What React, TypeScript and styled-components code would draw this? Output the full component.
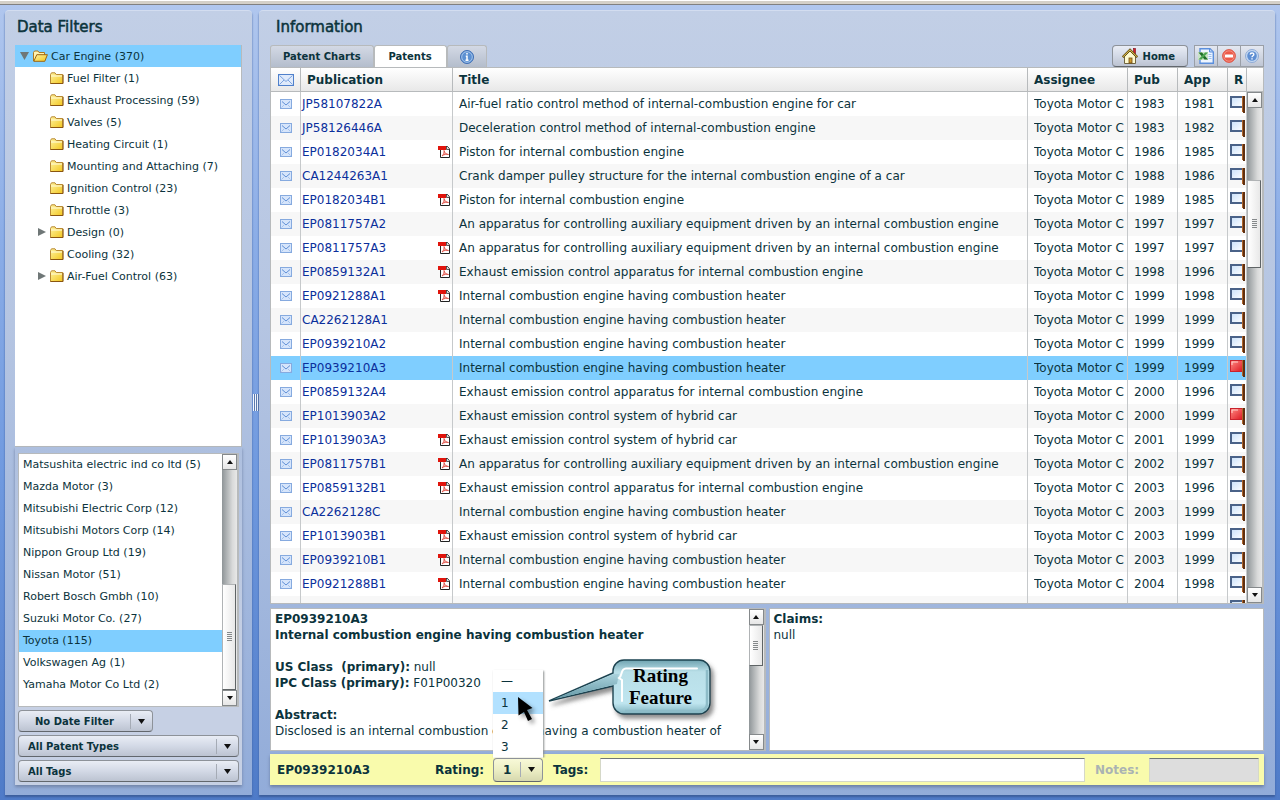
import React from "react";
import styled, { createGlobalStyle, css } from "styled-components";

const ink = "#0b333c";
const line = "#b7babc";
const sky = "#7fceff";

const GlobalStyle = createGlobalStyle`
  * { box-sizing: border-box; }
  body {
    margin: 0;
    font-family: "DejaVu Sans", Verdana, sans-serif;
    font-size: 12px;
    color: ${ink};
  }
  button, input, select { font-family: inherit; color: inherit; }
`;

/* ---------- Shell ---------- */

const Page = styled.div`
  display: flex;
  flex-direction: column;
  height: 100vh;
  min-height: 640px;
  overflow: hidden;
  background: linear-gradient(#b1c7ee 0, #8bade7 30%, #6f99df 60%, #4f7bc8 100%);
`;

const BrowserEdge = styled.div`
  flex: none;
  height: 5px;
  border-top: 1px solid #fff;
  border-bottom: 1px solid #808080;
  background: #d4d0c8;
`;

const Columns = styled.main`
  flex: 1;
  min-height: 0;
  display: flex;
  padding: 5px;
`;

const Panel = styled.section<{ $width?: string }>`
  flex: ${(p) => (p.$width ? `0 0 ${p.$width}` : "1")};
  min-width: 0;
  display: flex;
  flex-direction: column;
  padding: ${(p) => (p.$width ? "0 10px 10px" : "0 11px 10px")};
  border-top: 1px solid #d3ddf0;
  border-radius: 4px 4px 0 0;
  background: linear-gradient(#c2cfe6, #b5c5e2 40%, #92acd9);
  box-shadow: 0 2px 2px #3c5e9c;
`;

const PanelTitle = styled.h2<{ $inset: number }>`
  flex: none;
  margin: 0;
  padding: 0 ${(p) => p.$inset}px;
  height: 34px;
  line-height: 32px;
  font-size: 15px;
  font-weight: 400;
  -webkit-text-stroke: 0.5px ${ink};
`;

const Splitter = styled.div`
  flex: 0 0 7px;
  display: flex;
  align-items: center;
  justify-content: center;
  gap: 1px;
`;

const GripLine = styled.span`
  width: 1px;
  height: 17px;
  background: #f4f8ff;
  box-shadow: 1px 0 0 #5b79ab;
`;

/* ---------- Scroll bar ---------- */

const Bar = styled.div`
  flex: 0 0 16px;
  display: flex;
  flex-direction: column;
  background: linear-gradient(90deg, #8f9598, #d9dada 70%, #e8e8e8);
  border-right: 1px solid ${line};
`;

const BarButton = styled.button`
  flex: 0 0 16px;
  display: flex;
  align-items: center;
  justify-content: center;
  padding: 0;
  border: 1px solid #85898b;
  background: linear-gradient(#fff, #e6e6e6);
`;

const Space = styled.div<{ $share: number }>`
  flex: ${(p) => p.$share} 0 0;
`;

const Thumb = styled.div<{ $share: number }>`
  flex: ${(p) => p.$share} 0 0;
  display: flex;
  flex-direction: column;
  align-items: center;
  justify-content: center;
  gap: 1px;
  margin-right: 1px;
  border: 1px solid #b0b3b5;
  border-right-color: #5f6466;
  border-bottom-color: #5f6466;
  background: linear-gradient(90deg, #fff, #e8e8e8);
`;

const ThumbLine = styled.span`
  width: 5px;
  height: 1px;
  background: #85898b;
`;

function ScrollBar({ before, thumb, after }: { before: number; thumb: number; after: number }) {
  return (
    <Bar>
      <BarButton aria-label="Scroll up">
        <svg width="6" height="4"><path d="M3 0 6 4H0z" fill="#111" /></svg>
      </BarButton>
      {before > 0 && <Space $share={before} />}
      <Thumb $share={thumb}>
        {[0, 1, 2, 3, 4].map((n) => <ThumbLine key={n} />)}
      </Thumb>
      {after > 0 && <Space $share={after} />}
      <BarButton aria-label="Scroll down">
        <svg width="6" height="4"><path d="M0 0H6L3 4z" fill="#111" /></svg>
      </BarButton>
    </Bar>
  );
}

/* ---------- Icons ---------- */

const FolderIcon = ({ open }: { open?: boolean }) => (
  <svg width={open ? 15 : 14} height="12" viewBox={open ? "0 0 15 12" : "0 0 14 12"}>
    <defs>
      <linearGradient id="folderFill" x1="0" y1="0" x2="1" y2="1">
        <stop offset="0" stopColor="#fff3a0" />
        <stop offset="1" stopColor="#f2c61e" />
      </linearGradient>
    </defs>
    {open ? (
      <>
        <path d="M.5 11V2.5L1.5 1H5L6 2.5H11.5V5" fill="#fff3b0" stroke="#b07a1c" />
        <path d="M.8 11.3 3.8 4.7H14.4L11.8 11.3z" fill="url(#folderFill)" stroke="#9a6412" />
      </>
    ) : (
      <>
        <path d="M.5 11.5V2.5L1.5.8H5L6.2 2.5H12.8V11.5z" fill="url(#folderFill)" stroke="#b98a34" />
        <path d="M1 4H12" stroke="#fffbe0" />
        <path d="M.5 11.5H13V3" fill="none" stroke="#8a5510" />
      </>
    )}
  </svg>
);

const EnvelopeIcon = ({ large }: { large?: boolean }) => (
  <svg width={large ? 16 : 12} height={large ? 12 : 10} viewBox={large ? "0 0 16 12" : "0 0 12 10"}>
    {large ? (
      <>
        <rect x=".5" y=".5" width="15" height="11" fill="#dfeafb" stroke="#4f80cb" />
        <path d="M1.5 1.5 8 7.5 14.5 1.5M1.5 10.5 6 6M14.5 10.5 10 6" fill="none" stroke="#7ba3df" />
      </>
    ) : (
      <>
        <rect x=".5" y=".5" width="11" height="9" fill="#d6e5fb" stroke="#86aadf" />
        <path d="M2 2.5 6 6 10 2.5" fill="none" stroke="#5f8fd6" />
        <path d="M1.5 8.5 4 6M10.5 8.5 8 6" fill="none" stroke="#a5c3ee" />
      </>
    )}
  </svg>
);

const PdfIcon = () => (
  <svg width="12" height="12" viewBox="0 0 12 12">
    <path d="M2.5 1V11.5H11.5V3L9.5.5H2.5z" fill="#fff" stroke="#222" />
    <path d="M8.5.5V3.5H11.5" fill="#ddd" stroke="#333" strokeWidth=".8" />
    <rect x="0" y="0" width="8" height="4" fill="#e0140c" />
    <path d="M4 10C5.500 8.500 6.500 6.500 6 4.500 7 7.500 8.500 8.500 10.500 8.500 8.500 7.800 6 8.300 4 10z" fill="#f6b5ae" stroke="#e0584f" />
  </svg>
);

const FlagIcon = ({ red }: { red?: boolean }) => (
  <svg width="15" height="17" viewBox="0 0 15 17">
    <defs>
      <linearGradient id="flagRed" x1="0" y1="0" x2="1" y2="1">
        <stop offset="0" stopColor="#ff8d85" />
        <stop offset="1" stopColor="#dd1620" />
      </linearGradient>
      <linearGradient id="flagPlain" x1="0" y1="0" x2="1" y2="1">
        <stop offset="0" stopColor="#c9e0fa" />
        <stop offset="1" stopColor="#fff" />
      </linearGradient>
    </defs>
    {red ? (
      <>
        <rect x=".5" y=".5" width="12" height="11" fill="url(#flagRed)" stroke="#c9222c" />
        <path d="M2 5V2H8" fill="none" stroke="#ffd0cb" />
      </>
    ) : (
      <rect x="1" y="1" width="12" height="10" fill="url(#flagPlain)" stroke="#4a6288" strokeWidth="2" />
    )}
    <path d="M12.5 0V16" stroke="#b0652a" />
    <path d="M14 0V17" stroke="#5f2f10" strokeWidth="2" />
  </svg>
);

const InfoIcon = () => (
  <svg width="14" height="14" viewBox="0 0 14 14">
    <circle cx="7" cy="7" r="6.5" fill="#5c90d2" stroke="#3f6fb5" />
    <circle cx="7" cy="7" r="5.3" fill="none" stroke="#b5d0f0" strokeWidth=".8" />
    <path d="M7 3V4.6M5.8 6.2H7V10M5.5 10.3H8.5" fill="none" stroke="#fff" strokeWidth="1.5" />
  </svg>
);

const HomeIcon = () => (
  <svg width="16" height="16" viewBox="0 0 16 16">
    <rect x="11.5" y=".5" width="2" height="6" fill="#d8192a" stroke="#7a0f16" strokeWidth=".6" />
    <path d="M2.5 8.5V15.5H13.5V8.5L8 3z" fill="#fffbd0" stroke="#6f6440" />
    <path d="M.6 9.2 8 1.8 15.4 9.2" fill="none" stroke="#5f4b12" strokeWidth="2.2" />
    <path d="M1 8.8 8 1.8 15 8.8" fill="none" stroke="#f0d058" strokeWidth="1" />
    <rect x="7" y="10" width="3" height="5" fill="#d09a2c" stroke="#6e4a14" strokeWidth=".8" />
  </svg>
);

const ExcelIcon = () => (
  <svg width="16" height="16" viewBox="0 0 16 16">
    <path d="M2 .7H12L15.3 4V15.3H2z" fill="#eef5ff" stroke="#5b8fdc" strokeWidth="1.4" />
    <path d="M11.5 1V4H15" fill="#bcd5f7" stroke="#5b8fdc" />
    <path d="M10.5 6.5H13.5M10.5 8.5H13.5M10.5 10.5H13.5" stroke="#9fc0ea" />
    <rect x="0" y="4" width="10" height="8" fill="#c9e3c6" />
    <path d="M.5 4.5H4L10 11.5H6.5z" fill="#1d6f28" />
    <path d="M10 4.5H7L.5 11.5H3.5z" fill="#4ba551" />
  </svg>
);

const RemoveIcon = () => (
  <svg width="14" height="14" viewBox="0 0 14 14">
    <circle cx="7" cy="7" r="6.4" fill="#ec5a4a" stroke="#dd5a4c" />
    <circle cx="7" cy="7" r="5.2" fill="none" stroke="#f59b8d" strokeWidth=".8" />
    <rect x="3" y="5.5" width="8" height="3" rx=".5" fill="#fff" />
  </svg>
);

const HelpIcon = () => (
  <svg width="14" height="14" viewBox="0 0 14 14">
    <circle cx="7" cy="7" r="6.5" fill="#c5d9f2" stroke="#8fabd6" />
    <circle cx="7" cy="7" r="4.8" fill="#5e8fd3" />
    <path d="M5.2 5.6C5.2 3.4 8.8 3.4 8.8 5.5 8.8 6.8 7 6.7 7 8.2M7 9.2V10.5" fill="none" stroke="#fff" strokeWidth="1.4" />
  </svg>
);

/* ---------- Left panel ---------- */

const Tree = styled.ul`
  flex: 1;
  min-height: 0;
  overflow: hidden;
  margin: 0;
  padding: 0;
  list-style: none;
  border: 1px solid ${line};
  border-left: 0;
  border-top: 0;
  background: #fff;
`;

const TreeItem = styled.li<{ $root?: boolean }>`
  display: flex;
  align-items: center;
  gap: 2px;
  height: 22px;
  padding-left: ${(p) => (p.$root ? 5 : 22)}px;
  font-size: 11px;
  background: ${(p) => (p.$root ? sky : "transparent")};
  svg { flex: none; }
`;

const Twisty = styled.span`
  flex: 0 0 11px;
  height: 8px;
  display: flex;
  align-items: center;
`;

const TreeLabel = styled.span`
  padding-left: 1px;
`;

const FilterBox = styled.div`
  flex: none;
  display: flex;
  flex-direction: column;
  gap: 3px;
  padding: 6px 3px 3px;
  background: linear-gradient(#adbfdf, #c6d0e4 60%);
  box-shadow: 0 2px 3px #7184a8;
`;

const ListFrame = styled.div`
  display: flex;
  height: 254px;
  border: 1px solid ${line};
  background: #fff;
`;

const CompanyList = styled.ul`
  flex: 1;
  min-width: 0;
  overflow: hidden;
  margin: 0;
  padding: 0;
  list-style: none;
`;

const Company = styled.li<{ $on?: boolean }>`
  height: 22px;
  line-height: 22px;
  padding-left: 4px;
  font-size: 11px;
  white-space: nowrap;
  background: ${(p) => (p.$on ? sky : "transparent")};
`;

const buttonFace = css`
  border: 1px solid #8d9299;
  border-bottom-color: #62676d;
  border-radius: 4px;
  background: linear-gradient(#e9edf5, #d3d9e6 50%, #bcc3d1);
  font-size: 10px;
  font-weight: 700;
`;

const SplitButton = styled.button`
  ${buttonFace}
  flex: none;
  align-self: flex-start;
  width: 135px;
  height: 22px;
  display: flex;
  align-items: center;
  padding: 0;
`;

const SplitLabel = styled.span`
  flex: 1;
  text-align: center;
`;

const SplitArrow = styled.span`
  flex: 0 0 22px;
  height: 15px;
  display: flex;
  align-items: center;
  justify-content: center;
  border-left: 1px solid #a5abb5;
`;

const SelectWrap = styled.div<{ $tall?: boolean }>`
  flex: none;
  position: relative;
  height: ${(p) => (p.$tall ? 24 : 22)}px;
`;

const Select = styled.select<{ $pale?: boolean }>`
  ${buttonFace}
  appearance: none;
  width: 100%;
  height: 100%;
  margin: 0;
  padding: 0 24px 0 9px;
  ${(p) => p.$pale && css`
    font-size: 12px;
    background: linear-gradient(#f8f9d8, #eceec4 50%, #d6d8ae);
  `}
`;

const SelectArrow = styled.span`
  position: absolute;
  right: 1px;
  top: 4px;
  width: 22px;
  height: 15px;
  display: flex;
  align-items: center;
  justify-content: center;
  border-left: 1px solid #a5abb5;
  pointer-events: none;
`;

const DownArrow = () => (
  <svg width="7" height="5"><path d="M0 0H7L3.5 5z" fill="#111" /></svg>
);

/* ---------- Tab row ---------- */

const TabRow = styled.div`
  flex: none;
  display: flex;
  align-items: stretch;
  height: 22px;
`;

const Tab = styled.button<{ $on?: boolean }>`
  display: flex;
  align-items: center;
  justify-content: center;
  padding: 0 12px;
  min-width: ${(p) => (p.$on ? 73 : 39)}px;
  border: 1px solid ${line};
  border-bottom: 0;
  border-radius: 3px 3px 0 0;
  font-size: 10px;
  font-weight: 700;
  background: ${(p) => (p.$on ? "#fff" : "linear-gradient(#d3d9e5, #b4bdcc)")};
`;

const Spring = styled.div`
  flex: 1;
`;

const HomeButton = styled.button`
  ${buttonFace}
  display: flex;
  align-items: center;
  gap: 5px;
  padding: 0 12px 0 9px;
  margin-right: 6px;
`;

const Tools = styled.div`
  display: flex;
  border: 1px solid #9a9fa7;
`;

const IconButton = styled.button`
  width: 22px;
  display: flex;
  align-items: center;
  justify-content: center;
  padding: 0;
  border: 0;
  background: linear-gradient(#e4e8f1, #bfc6d4);
  & + & { width: 23px; border-left: 1px solid #9a9fa7; }
`;

/* ---------- Patent table ---------- */

const GridFrame = styled.div`
  flex: 1;
  min-height: 0;
  display: flex;
  overflow: hidden;
  border: 1px solid ${line};
  background: #fff;
`;

const GridBody = styled.div`
  flex: 1;
  min-width: 0;
  overflow: hidden;
`;

const Table = styled.table`
  width: 100%;
  table-layout: fixed;
  border-collapse: separate;
  border-spacing: 0;
`;

const headFace = css`
  height: 24px;
  border-bottom: 1px solid ${line};
  background: linear-gradient(#fff, #e8e8e8);
`;

const Th = styled.th<{ $center?: boolean }>`
  ${headFace}
  padding: 0 0 0 6px;
  text-align: left;
  font-size: 12px;
  border-right: 1px solid ${line};
  ${(p) => p.$center && css`padding: 0; text-align: center; svg { display: block; margin: 0 auto; }`}
`;

const Row = styled.tr<{ $on?: boolean }>`
  background: ${(p) => (p.$on ? sky : "#fff")};
  &:nth-child(even) { background: ${(p) => (p.$on ? sky : "#f7f7f7")}; }
`;

const Td = styled.td<{ $pad: number }>`
  height: 24px;
  padding: 0 2px 0 ${(p) => p.$pad}px;
  border-right: 1px solid #c6c9cb;
  overflow: hidden;
  white-space: nowrap;
`;

const IconTd = styled(Td)`
  padding: 0;
  svg { display: block; margin: 0 auto; }
`;

const Clip = styled.div`
  overflow: hidden;
`;

const PubCell = styled.div`
  display: flex;
  align-items: center;
  justify-content: space-between;
`;

const PubLink = styled.a`
  color: #0b2f9c;
  text-decoration: none;
`;

const GridScroll = styled.div`
  flex: 0 0 16px;
  display: flex;
  flex-direction: column;
`;

const HeadStub = styled.div`
  ${headFace}
  flex: none;
`;

const BarSlot = styled.div`
  flex: 1;
  min-height: 0;
  display: flex;
`;

/* ---------- Detail panes ---------- */

const Details = styled.div`
  flex: none;
  display: flex;
  gap: 3px;
  height: 143px;
  margin: 4px 0 3px;
`;

const Pane = styled.article`
  flex: 1 1 0;
  min-width: 0;
  display: flex;
  border: 1px solid ${line};
  background: #fff;
`;

const PaneText = styled.div`
  flex: 1;
  min-width: 0;
  overflow: hidden;
  padding: 2px 4px;
  line-height: 16px;
  white-space: pre-wrap;
`;

/* ---------- Rating bar ---------- */

const RateBar = styled.form`
  flex: none;
  display: flex;
  align-items: center;
  height: 31px;
  padding: 0 5px 0 7px;
  background: #f9fbac;
  box-shadow: 0 2px 3px #6b7ea3;
  font-size: 12px;
  font-weight: 700;
`;

const PatentId = styled.span`
  flex: 0 0 158px;
`;

const Label = styled.label<{ $width: number; $muted?: boolean }>`
  flex: 0 0 ${(p) => p.$width}px;
  color: ${(p) => (p.$muted ? "#aab3b3" : "inherit")};
`;

const Field = styled.input<{ $width?: string }>`
  flex: ${(p) => (p.$width ? `0 0 ${p.$width}` : "1")};
  min-width: 0;
  height: 24px;
  margin-right: ${(p) => (p.$width ? 0 : 10)}px;
  border: 1px solid #d5d8c8;
  border-top-color: #6f7777;
  background: #fff;
  &:disabled { background: #ddd; }
`;

const RatingBox = styled.div`
  position: relative;
  flex: 0 0 50px;
  margin-right: 10px;
`;

const Popup = styled.ul`
  position: absolute;
  z-index: 2;
  left: 0;
  bottom: 100%;
  width: 50px;
  margin: 0;
  padding: 0;
  list-style: none;
  background: #fff;
  box-shadow: 1px 1px 2px #8b9090;
  clip-path: inset(0 -3px 0 -3px);
`;

const Choice = styled.li<{ $on?: boolean }>`
  height: 22px;
  line-height: 22px;
  padding-left: 8px;
  font-weight: 400;
  background: ${(p) => (p.$on ? "#b2e1ff" : "#fff")};
`;

const Pointer = styled.svg`
  position: absolute;
  z-index: 4;
  left: 24px;
  bottom: 52px;
`;

const Callout = styled.div`
  position: absolute;
  z-index: 3;
  left: 52px;
  bottom: 58px;
  width: 176px;
  height: 66px;
`;

const CalloutText = styled.p`
  position: absolute;
  right: 12px;
  top: 7px;
  width: 97px;
  margin: 0;
  text-align: center;
  font-family: "Liberation Serif", "Times New Roman", serif;
  font-size: 19px;
  line-height: 22px;
  font-weight: 700;
  color: #000;
`;

/* ---------- Data ---------- */

const categories = [
  "Fuel Filter (1)",
  "Exhaust Processing (59)",
  "Valves (5)",
  "Heating Circuit (1)",
  "Mounting and Attaching (7)",
  "Ignition Control (23)",
  "Throttle (3)",
  "Design (0)",
  "Cooling (32)",
  "Air-Fuel Control (63)",
];
const branches = ["Design (0)", "Air-Fuel Control (63)"];

const companies = [
  "Matsushita electric ind co ltd (5)",
  "Mazda Motor (3)",
  "Mitsubishi Electric Corp (12)",
  "Mitsubishi Motors Corp (14)",
  "Nippon Group Ltd (19)",
  "Nissan Motor (51)",
  "Robert Bosch Gmbh (10)",
  "Suzuki Motor Co. (27)",
  "Toyota (115)",
  "Volkswagen Ag (1)",
  "Yamaha Motor Co Ltd (2)",
];

const assignee = "Toyota Motor C";
const heater = "Internal combustion engine having combustion heater";
const exhaust = "Exhaust emission control apparatus for internal combustion engine";
const hybrid = "Exhaust emission control system of hybrid car";
const auxiliary = "An apparatus for controlling auxiliary equipment driven by an internal combustion engine";

type Patent = [id: string, pdf: boolean, title: string, pub: string, app: string, flagged?: boolean];

const patents: Patent[] = [
  ["JP58107822A", false, "Air-fuel ratio control method of internal-combustion engine for car", "1983", "1981"],
  ["JP58126446A", false, "Deceleration control method of internal-combustion engine", "1983", "1982"],
  ["EP0182034A1", true, "Piston for internal combustion engine", "1986", "1985"],
  ["CA1244263A1", false, "Crank damper pulley structure for the internal combustion engine of a car", "1988", "1986"],
  ["EP0182034B1", true, "Piston for internal combustion engine", "1989", "1985"],
  ["EP0811757A2", false, auxiliary, "1997", "1997"],
  ["EP0811757A3", true, auxiliary, "1997", "1997"],
  ["EP0859132A1", true, exhaust, "1998", "1996"],
  ["EP0921288A1", true, heater, "1999", "1998"],
  ["CA2262128A1", false, heater, "1999", "1999"],
  ["EP0939210A2", false, heater, "1999", "1999"],
  ["EP0939210A3", false, heater, "1999", "1999", true],
  ["EP0859132A4", false, exhaust, "2000", "1996"],
  ["EP1013903A2", false, hybrid, "2000", "1999", true],
  ["EP1013903A3", true, hybrid, "2001", "1999"],
  ["EP0811757B1", true, auxiliary, "2002", "1997"],
  ["EP0859132B1", true, exhaust, "2003", "1996"],
  ["CA2262128C", false, heater, "2003", "1999"],
  ["EP1013903B1", true, hybrid, "2003", "1999"],
  ["EP0939210B1", true, heater, "2003", "1999"],
  ["EP0921288B1", true, heater, "2004", "1998"],
  ["EP1304377A2", false, "", "", ""],
];

const selected = "EP0939210A3";

/* ---------- App ---------- */

export default function App() {
  return (
    <>
      <GlobalStyle />
      <Page>
        <BrowserEdge />
        <Columns>
          <Panel $width="247px">
            <PanelTitle $inset={2}>Data Filters</PanelTitle>
            <Tree>
              <TreeItem $root>
                <Twisty><svg width="9" height="8"><path d="M0 0H9L4.5 8z" fill="#6f7777" /></svg></Twisty>
                <FolderIcon open />
                <TreeLabel>Car Engine (370)</TreeLabel>
              </TreeItem>
              {categories.map((c) => (
                <TreeItem key={c}>
                  <Twisty>
                    {branches.includes(c) && (
                      <svg width="9" height="8"><path d="M1 0 9 4 1 8z" fill="#6f7777" /></svg>
                    )}
                  </Twisty>
                  <FolderIcon />
                  <TreeLabel>{c}</TreeLabel>
                </TreeItem>
              ))}
            </Tree>
            <FilterBox>
              <ListFrame>
                <CompanyList>
                  {companies.map((c) => (
                    <Company key={c} $on={c.startsWith("Toyota")}>{c}</Company>
                  ))}
                </CompanyList>
                <ScrollBar before={115} thumb={105} after={0} />
              </ListFrame>
              <SplitButton>
                <SplitLabel>No Date Filter</SplitLabel>
                <SplitArrow><DownArrow /></SplitArrow>
              </SplitButton>
              <SelectWrap>
                <Select aria-label="Patent types"><option>All Patent Types</option></Select>
                <SelectArrow><DownArrow /></SelectArrow>
              </SelectWrap>
              <SelectWrap>
                <Select aria-label="Tags"><option>All Tags</option></Select>
                <SelectArrow><DownArrow /></SelectArrow>
              </SelectWrap>
            </FilterBox>
          </Panel>

          <Splitter>
            <GripLine /><GripLine /><GripLine />
          </Splitter>

          <Panel>
            <PanelTitle $inset={6}>Information</PanelTitle>
            <TabRow>
              <Tab>Patent Charts</Tab>
              <Tab $on>Patents</Tab>
              <Tab aria-label="About"><InfoIcon /></Tab>
              <Spring />
              <HomeButton><HomeIcon />Home</HomeButton>
              <Tools>
                <IconButton aria-label="Export to spreadsheet"><ExcelIcon /></IconButton>
                <IconButton aria-label="Remove"><RemoveIcon /></IconButton>
                <IconButton aria-label="Help"><HelpIcon /></IconButton>
              </Tools>
            </TabRow>
            <GridFrame>
              <GridBody>
                <Table>
                  <colgroup>
                    <col style={{ width: 30 }} />
                    <col style={{ width: 152 }} />
                    <col />
                    <col style={{ width: 100 }} />
                    <col style={{ width: 50 }} />
                    <col style={{ width: 50 }} />
                    <col style={{ width: 19 }} />
                  </colgroup>
                  <thead>
                    <tr>
                      <Th $center aria-label="Mail"><EnvelopeIcon large /></Th>
                      <Th>Publication</Th>
                      <Th>Title</Th>
                      <Th>Assignee</Th>
                      <Th>Pub</Th>
                      <Th>App</Th>
                      <Th>R</Th>
                    </tr>
                  </thead>
                  <tbody>
                    {patents.map(([id, pdf, title, pub, app, flagged]) => (
                      <Row key={id} $on={id === selected}>
                        <IconTd $pad={0}><EnvelopeIcon /></IconTd>
                        <Td $pad={1}>
                          <PubCell>
                            <PubLink href={`#${id}`}>{id}</PubLink>
                            {pdf && <PdfIcon />}
                          </PubCell>
                        </Td>
                        <Td $pad={6}>{title}</Td>
                        <Td $pad={6}><Clip>{title && assignee}</Clip></Td>
                        <Td $pad={6}>{pub}</Td>
                        <Td $pad={6}>{app}</Td>
                        <IconTd $pad={0}><FlagIcon red={flagged} /></IconTd>
                      </Row>
                    ))}
                  </tbody>
                </Table>
              </GridBody>
              <GridScroll>
                <HeadStub />
                <BarSlot><ScrollBar before={72} thumb={87} after={321} /></BarSlot>
              </GridScroll>
            </GridFrame>
            <Details>
              <Pane>
                <PaneText>
                  <b>{selected}</b>{"\n"}
                  <b>{heater}</b>{"\n\n"}
                  <b>{"US Class  (primary):"}</b>{" null\n"}
                  <b>IPC Class (primary):</b>{" F01P00320\n\n"}
                  <b>Abstract:</b>{"\n"}
                  Disclosed is an internal combustion engine having a combustion heater of
                </PaneText>
                <ScrollBar before={0} thumb={40} after={69} />
              </Pane>
              <Pane>
                <PaneText>
                  <b>Claims:</b>{"\nnull"}
                </PaneText>
              </Pane>
            </Details>
            <RateBar>
              <PatentId>{selected}</PatentId>
              <Label $width={58} htmlFor="rating">Rating:</Label>
              <RatingBox>
                <SelectWrap $tall>
                  <Select $pale id="rating" defaultValue="1"><option>1</option></Select>
                  <SelectArrow><DownArrow /></SelectArrow>
                </SelectWrap>
                <Popup>
                  <Choice>—</Choice>
                  <Choice $on>1</Choice>
                  <Choice>2</Choice>
                  <Choice>3</Choice>
                </Popup>
                <Callout>
                  <svg width="176" height="66" viewBox="0 0 176 66">
                    <defs>
                      <linearGradient id="bubble" x1="0" y1="0" x2="0" y2="1">
                        <stop offset="0" stopColor="#6fa3b0" />
                        <stop offset=".22" stopColor="#b9dfe8" />
                        <stop offset=".8" stopColor="#bfe5ef" />
                        <stop offset="1" stopColor="#7fb2be" />
                      </linearGradient>
                      <linearGradient id="tail" x1="0" y1="0" x2="0" y2="1">
                        <stop offset="0" stopColor="#a9d2dc" />
                        <stop offset="1" stopColor="#6497a5" />
                      </linearGradient>
                      <filter id="shade" x="-10%" y="-10%" width="125%" height="140%">
                        <feDropShadow dx="3" dy="4" stdDeviation="2" floodColor="#555" floodOpacity=".65" />
                      </filter>
                    </defs>
                    <path
                      d="M79 2H154A11 11 0 0 1 165 13V45A11 11 0 0 1 154 56H79A11 11 0 0 1 68 45V28L4 43 68 15V13A11 11 0 0 1 79 2z"
                      fill="url(#bubble)" stroke="#1d4350" strokeWidth="1.4" filter="url(#shade)"
                    />
                    <path d="M8 41.5 69 16H74L72 26z" fill="url(#tail)" />
                    <path d="M77 43V22L74 20C78 17 75 11 81 10.5H152" fill="none" stroke="#fff" strokeWidth="2" strokeLinecap="round" />
                    <path d="M162 12V46Q162 52 154 53H80" fill="none" stroke="#8dbcc8" strokeWidth="2.5" />
                  </svg>
                  <CalloutText>Rating<br />Feature</CalloutText>
                </Callout>
                <Pointer width="26" height="34" viewBox="0 0 26 34">
                  <path d="M1 1 15.5 12 10 14 15 23 11 25 7 16 1.5 19.5z" fill="#000" style={{ filter: "drop-shadow(3px 3px 2px rgba(0,0,0,.4))" }} />
                </Pointer>
              </RatingBox>
              <Label $width={47} htmlFor="tags">Tags:</Label>
              <Field id="tags" />
              <Label $width={54} $muted htmlFor="notes">Notes:</Label>
              <Field id="notes" $width="110px" disabled />
            </RateBar>
          </Panel>
        </Columns>
      </Page>
    </>
  );
}
